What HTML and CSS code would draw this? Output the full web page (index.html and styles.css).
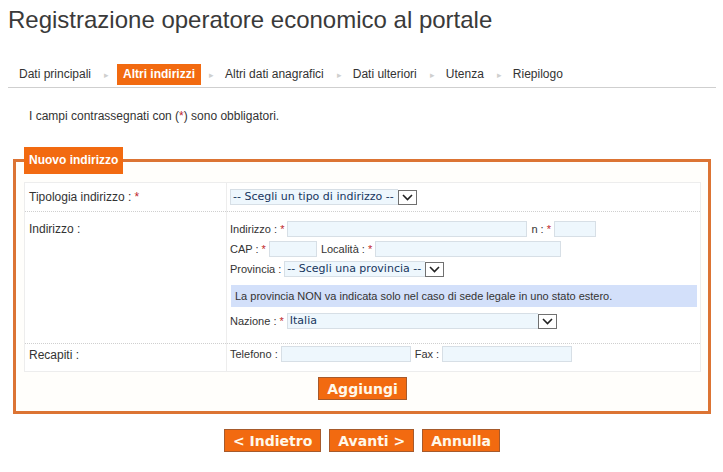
FILE: index.html
```html
<!DOCTYPE html>
<html lang="it">
<head>
    <meta charset="UTF-8">
    <title>Registrazione operatore economico al portale</title>
    <link rel="stylesheet" href="styles.css">
</head>
<body>
    <!-- Titolo pagina -->
    <h1 class="page-title">Registrazione operatore economico al portale</h1>

    <!-- Passi del wizard -->
    <ul class="steps">
        <li class="step">Dati principali</li>
        <li class="step-sep">&#9656;</li>
        <li class="step active">Altri indirizzi</li>
        <li class="step-sep">&#9656;</li>
        <li class="step">Altri dati anagrafici</li>
        <li class="step-sep">&#9656;</li>
        <li class="step">Dati ulteriori</li>
        <li class="step-sep">&#9656;</li>
        <li class="step">Utenza</li>
        <li class="step-sep">&#9656;</li>
        <li class="step">Riepilogo</li>
    </ul>

    <p class="note">I campi contrassegnati con (<span class="req">*</span>) sono obbligatori.</p>

    <fieldset class="box">
        <legend class="box-title">Nuovo indirizzo</legend>

        <table class="form-table">
            <tr class="row-type">
                <td class="label-cell">Tipologia indirizzo : <span class="req">*</span></td>
                <td class="field-cell">
                    <span class="sel">
                        <select class="sel-input sel-type"><option>-- Scegli un tipo di indirizzo --</option></select>
                        <span class="sel-arrow"><svg width="11" height="7" viewBox="0 0 11 7"><path d="M1 1 L5.5 5.5 L10 1" fill="none" stroke="#222" stroke-width="1.6"/></svg></span>
                    </span>
                </td>
            </tr>
            <tr class="row-address">
                <td class="label-cell">Indirizzo :</td>
                <td class="field-cell">
                    <div class="line">
                        <label class="lbl">Indirizzo : <span class="req">*</span></label>
                        <input class="txt w-street" type="text">
                        <label class="lbl">n : <span class="req">*</span></label>
                        <input class="txt w-num" type="text">
                    </div>
                    <div class="line">
                        <label class="lbl">CAP : <span class="req">*</span></label>
                        <input class="txt w-cap" type="text">
                        <label class="lbl">Località : <span class="req">*</span></label>
                        <input class="txt w-city" type="text">
                    </div>
                    <div class="line">
                        <label class="lbl">Provincia :</label>
                        <span class="sel">
                            <select class="sel-input sel-prov"><option>-- Scegli una provincia --</option></select>
                            <span class="sel-arrow"><svg width="11" height="7" viewBox="0 0 11 7"><path d="M1 1 L5.5 5.5 L10 1" fill="none" stroke="#222" stroke-width="1.6"/></svg></span>
                        </span>
                    </div>
                    <div class="info">La provincia NON va indicata solo nel caso di sede legale in uno stato estero.</div>
                    <div class="line">
                        <label class="lbl">Nazione : <span class="req">*</span></label>
                        <span class="sel">
                            <select class="sel-input sel-country"><option>Italia</option></select>
                            <span class="sel-arrow"><svg width="11" height="7" viewBox="0 0 11 7"><path d="M1 1 L5.5 5.5 L10 1" fill="none" stroke="#222" stroke-width="1.6"/></svg></span>
                        </span>
                    </div>
                </td>
            </tr>
            <tr class="row-contacts">
                <td class="label-cell">Recapiti :</td>
                <td class="field-cell">
                    <div class="line">
                        <label class="lbl">Telefono :</label>
                        <input class="txt w-phone" type="text">
                        <label class="lbl">Fax :</label>
                        <input class="txt w-phone" type="text">
                    </div>
                </td>
            </tr>
        </table>

        <div class="box-actions">
            <button class="btn">Aggiungi</button>
        </div>
    </fieldset>

    <!-- Navigazione wizard -->
    <div class="actions">
        <button class="btn">&lt; Indietro</button>
        <button class="btn">Avanti &gt;</button>
        <button class="btn">Annulla</button>
    </div>
</body>
</html>
```

FILE: styles.css
```css
/* Pagina */
body {
    margin: 0;
    padding: 0 7px 0 8px;
    background: #fff;
    font-family: "Liberation Sans", Arial, sans-serif;
    font-size: 12px;
    color: #333;
}

.page-title {
    margin: 0;
    padding-top: 6px;
    font-size: 24px;
    font-weight: normal;
    line-height: 28px;
    color: #3a3a3a;
}

/* Passi */
.steps {
    list-style: none;
    margin: 30px 0 0 0;
    padding: 0 0 2px 6px;
    display: flex;
    align-items: center;
    border-bottom: 1px solid #cfcfcf;
}

.step {
    padding: 0 5px;
    line-height: 21px;
    color: #333;
}

.step.active {
    background: #f26a10;
    color: #fff;
    font-weight: bold;
    padding: 0 6px;
    margin-left: 2px;
}

.step-sep {
    color: #cfcfcf;
    font-size: 9px;
    margin: 0 6px 0 8px;
}

.note {
    margin: 21px 0 0 21px;
    line-height: 14px;
}

.req {
    color: #c0272d;
}

/* Riquadro nuovo indirizzo */
.box {
    margin: 24px 5px 0 5px;
    padding: 8px 7px 11px 8px;
    border: 3px solid #dc7434;
    background: #fffefb;
}

.box-title {
    background: #f26a10;
    color: #fff;
    font-weight: bold;
    font-size: 12px;
    line-height: 27px;
    padding: 0 5px;
    margin-left: 0;
}

.form-table {
    width: 100%;
    border-collapse: collapse;
    border: 1px solid #ededed;
    background: #fff;
}

.form-table td {
    vertical-align: top;
    border-top: 1px dotted #cfcfcf;
}

.form-table tr:first-child td {
    border-top: 1px solid #ededed;
}

.label-cell {
    width: 197px;
    padding: 7px 0 0 4px;
    font-size: 12px;
    line-height: 14px;
    border-right: 1px solid #ededed;
}

.field-cell {
    padding: 6px 3px 4px 3px;
    font-size: 11px;
}

.row-type .field-cell {
    padding-top: 6px;
    padding-bottom: 6px;
    height: 16px;
}

.row-address .label-cell {
    padding-top: 10px;
}

.row-address .field-cell {
    padding-top: 7px;
    padding-bottom: 12px;
}

.row-contacts .label-cell {
    padding-top: 4px;
}

.row-contacts .field-cell {
    padding-top: 0;
    padding-bottom: 7px;
}

.line {
    display: flex;
    align-items: center;
    height: 20px;
}

.lbl {
    color: #333;
    margin-right: 3px;
    white-space: pre;
}

.txt {
    height: 16px;
    box-sizing: border-box;
    border: 1px solid #d7dfe6;
    background: #eef7fd;
    padding: 0 2px;
    margin: 0 4px 0 0;
    font-size: 11px;
}

.w-street { width: 240px; }
.w-num { width: 42px; }
.w-cap { width: 48px; }
.w-city { width: 186px; }
.w-phone { width: 130px; }

/* Select */
.sel {
    display: inline-flex;
    align-items: center;
    height: 16px;
}

.sel-input {
    appearance: none;
    -webkit-appearance: none;
    height: 16px;
    box-sizing: border-box;
    border: 1px solid #d7dfe6;
    border-right: none;
    background: #eef7fd;
    padding: 0 2px;
    margin: 0;
    font-family: "DejaVu Sans", Verdana, sans-serif;
    font-size: 11px;
    line-height: 14px;
    color: #16365e;
}

.sel-type { width: 168px; }
.sel-prov { width: 141px; }
.sel-country { width: 251px; }

.sel-arrow {
    width: 19px;
    height: 15px;
    box-sizing: border-box;
    border: 1px solid #707070;
    background: #fff;
    display: flex;
    align-items: center;
    justify-content: center;
}

.info {
    margin: 6px 0 4px 1px;
    padding: 0 4px;
    line-height: 22px;
    background: #d3e0fa;
    color: #333;
    font-size: 11px;
}

/* Bottoni */
.btn {
    background: #f26a10;
    border: 1px solid #a65a2c;
    color: #fff8ea;
    font-family: "DejaVu Sans", Verdana, sans-serif;
    font-weight: bold;
    font-size: 14px;
    height: 23px;
    padding: 0 8px;
    cursor: pointer;
}

.box-actions {
    display: flex;
    justify-content: center;
    padding-top: 5px;
}

.actions {
    display: flex;
    justify-content: center;
    gap: 8px;
    margin-top: 15px;
}
```
